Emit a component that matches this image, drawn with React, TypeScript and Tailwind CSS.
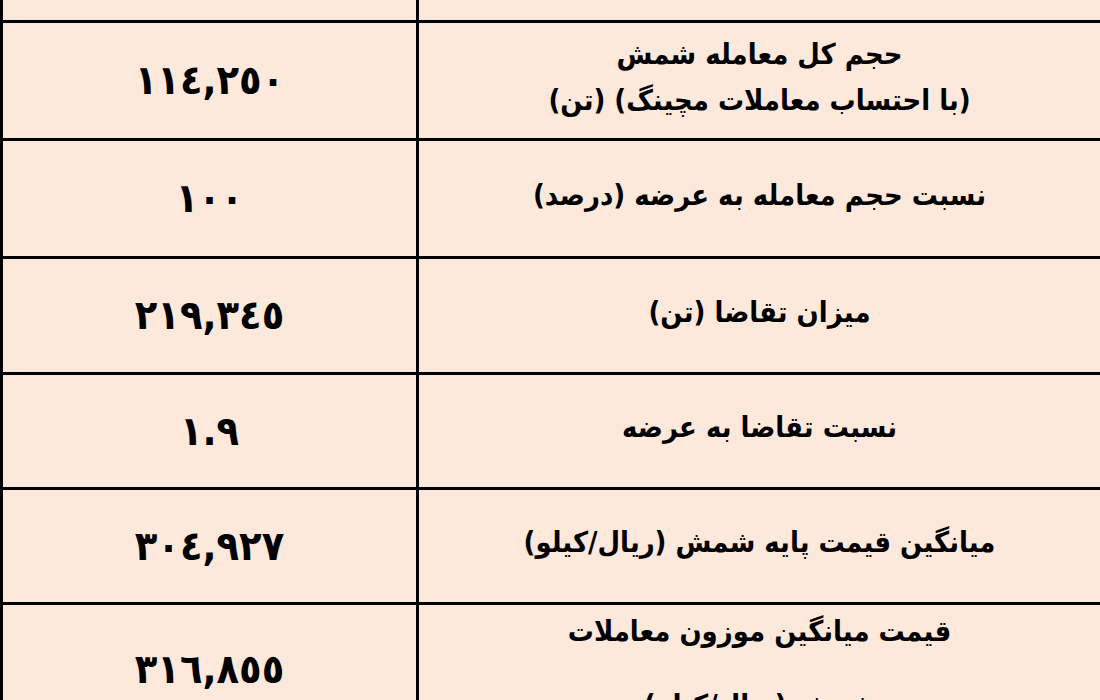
const rows = [
  { value: '١١٤,٢٥٠', label: ['حجم کل معامله شمش', '(با احتساب معاملات مچینگ) (تن)'], h: 'h-[118px]' },
  { value: '١٠٠', label: ['نسبت حجم معامله به عرضه (درصد)'], h: 'h-[118px]' },
  { value: '٢١٩,٣٤٥', label: ['میزان تقاضا (تن)'], h: 'h-[116px]' },
  { value: '١.٩', label: ['نسبت تقاضا به عرضه'], h: 'h-[115px]' },
  { value: '٣٠٤,٩٢٧', label: ['میانگین قیمت پایه شمش (ریال/کیلو)'], h: 'h-[115px]' },
];

export default function App() {
  return (
    <div className="w-[1100px] h-[700px] overflow-hidden bg-[#fde9dc] text-black font-['DejaVu_Sans',sans-serif] font-bold">
      {/* partial row cut off at top */}
      <div className="grid grid-cols-[419px_1fr] h-[20px]">
        <div className="border-l-[3px] border-r-[3px] border-black" />
        <div />
      </div>

      {rows.map((r) => (
        <div key={r.value} className={`grid grid-cols-[419px_1fr] border-t-[3px] border-black ${r.h}`}>
          <div className="border-l-[3px] border-r-[3px] border-black flex items-center justify-center">
            <span dir="ltr" className="text-[37px] leading-none scale-y-110">{r.value}</span>
          </div>
          <div dir="rtl" className="flex flex-col items-center justify-center gap-[10px] pb-[8px]">
            {r.label.map((l) => (
              <span key={l} className="text-[26px] leading-[36px] scale-y-110">{l}</span>
            ))}
          </div>
        </div>
      ))}

      {/* last row, runs past the bottom edge */}
      <div className="grid grid-cols-[419px_1fr] border-t-[3px] border-black h-[132px]">
        <div className="border-l-[3px] border-r-[3px] border-black flex items-center justify-center">
          <span dir="ltr" className="text-[37px] leading-none scale-y-110">٣١٦,٨٥٥</span>
        </div>
        <div dir="rtl" className="flex flex-col items-center pt-[8px] gap-[38px]">
          <span className="text-[26px] leading-[36px] scale-y-110">قیمت میانگین موزون معاملات</span>
          <span className="text-[26px] leading-[36px] scale-y-110">شمش (ریال/کیلو)</span>
        </div>
      </div>
    </div>
  );
}
